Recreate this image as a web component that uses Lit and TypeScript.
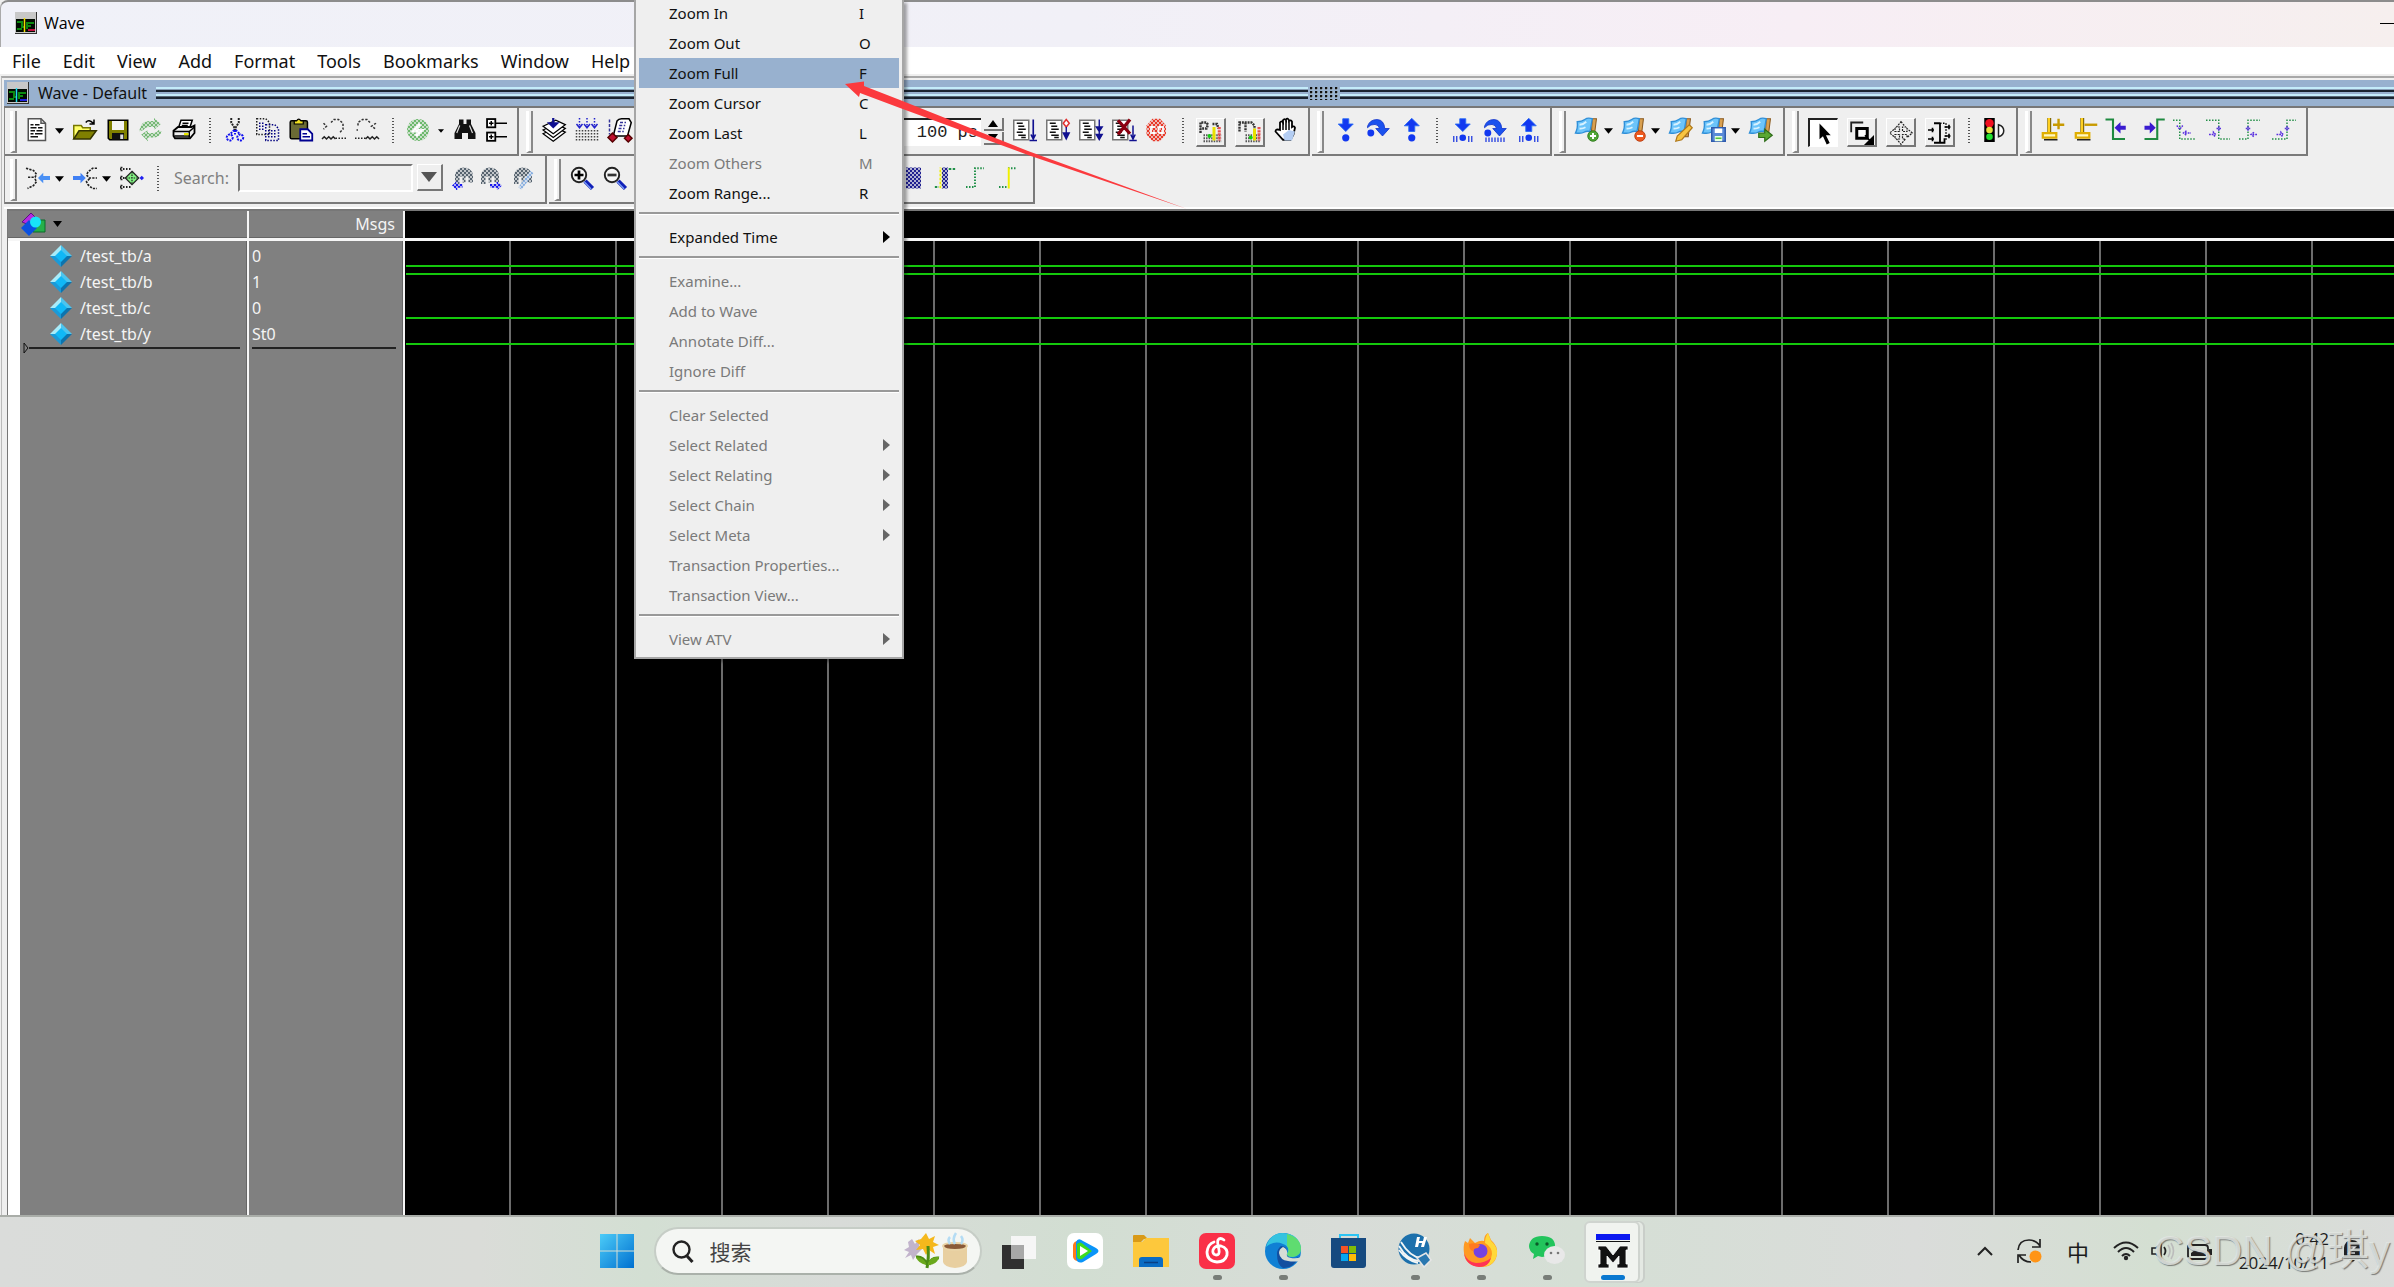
import { LitElement, html, svg, css, TemplateResult } from "lit";
import { customElement } from "lit/decorators.js";
import { classMap } from "lit/directives/class-map.js";

/* ---------- toolbar glyphs, drawn on a 16 x 16 grid ---------- */

const k = "#000";
const docLines = svg`<rect x=".5" y="1.5" width="10" height="13" fill="#fff" stroke="#777"/>
  <path d="M2.5 3.5h4M3.5 5.5h4M3.5 7.5h5M2.5 9.5h4M3.5 11.5h5M5.5 13h3" stroke="#111" fill="none"/>`;
const flag = svg`<path d="M11.500 .5h2.800l-1.500 12h-2z" fill="#d9a050" stroke="#8a5a20" stroke-width=".7"/>
  <path d="M1.500 2.500q3 0 5-1.500t5-.5L10 9q-2.500-.5-4 .5t-5.700.5q1.700-3 1.200-7.500z" fill="#6cc4fa" stroke="#2f8fd8" stroke-width=".9"/>
  <path d="M3 4.500q2.500 0 4.500-2M3 7q2 .3 4-.8" stroke="#d8f2ff" stroke-width="1.200" fill="none"/>`;
const binocular = svg`<path d="M4 1h3v3h2V1h3v3l3 6v4h-5v-4H6v4H1v-4l3-6z" fill="#111"/><path d="M4.500 5L2.500 10M11 5l2 5" stroke="#ddd" stroke-width=".8"/>`;
const ballDown = svg`<path d="M6.500 .5h4v3.500h3L8.500 9 3.500 4h3z" fill="#1238f0" stroke="#2a6cf5" stroke-width=".6"/>`;
const ballUp = svg`<path d="M8.500 .2l5 5h-3V9h-4V5.200h-3z" fill="#1238f0" stroke="#2a6cf5" stroke-width=".6"/>`;
const ballOver = svg`<path d="M1 5.500Q2.500 1 7.500 1q4.500.3 5 6h3l-4.500 5-4.500-5h2.500Q8.500 4.500 6 4.300 3 4 1 6.500z" fill="#1b52ee" stroke="#0a2bc8" stroke-width=".5"/><circle cx="3.200" cy="10" r="2.300" fill="#1238f0"/>`;
const bars = svg`<path d="M2.500 12v4M4.500 12v4M12.500 12v4M14.500 12v4" stroke="#2a44e0" stroke-width=".9"/>`;
const lens = svg`<circle cx="6" cy="6" r="4.800" fill="#f6f6f6" stroke="#222" stroke-width="1.300"/><path d="M10 10l5 5" stroke="#1020b8" stroke-width="3"/><path d="M9.600 10.600l4.500 4.600" stroke="#8ab0ff" stroke-width=".7"/>`;
const person = svg`<path d="M2 6q1-5 6-5t6 5v5h-3V7H9v4H7V7H5v5H2z" fill="#56636f"/>`;

const glyphs: Record<string, TemplateResult> = {
  doc: svg`<path d="M1.500 .5h8.500l3 3v11.500h-11.500z" fill="#fff" stroke="#555"/><path d="M10 .5v3h3" fill="none" stroke="#555"/><path d="M3 4.500h2M6 4.500h3M3 6.500h4M8 6.500h3M3 8.500h3M7 8.500h4M3 10.500h2M6 10.500h5M3 12.500h5" stroke="#111"/>`,
  open: svg`<path d="M.5 14V5h5l1 1.500h5V9" fill="#ffff6a" stroke="#777700"/><path d="M.5 14l3.500-5.500h11.500L11.500 14z" fill="#808000" stroke="#333300"/><path d="M8.500 3q2-2.500 5 .5M14 1v3h-3" stroke="${k}" fill="none"/>`,
  save: svg`<path d="M1.500 1.500h13v13h-12l-1-1z" fill="#808000" stroke="${k}"/><rect x="4" y="2" width="8" height="6" fill="#f4f4f4"/><rect x="4" y="10" width="8" height="4.500" fill="#111"/><rect x="9.500" y="11" width="2" height="3" fill="#ddd"/>`,
  refresh: svg`<path d="M1 6q1-4 6-4h3V0l4.500 4L10 8V6H7Q4 6 3 8L0 9z" fill="#74b874"/><path d="M15 9q-1 4-6 4H6v2.500L1.500 11 6 8v2h3q3 0 4-2z" fill="#74b874"/>`,
  print: svg`<path d="M4.500 6L6 1.500h7.500L12 6z" fill="#fff" stroke="${k}"/><path d="M7 3.500h4M6.500 5h4" stroke="${k}"/><path d="M1 8.500L4 6h9l2-1v5l-3 3.500H2l-1-1.500z" fill="#eee" stroke="${k}" stroke-width="1.200"/><path d="M1 9h10.500L15 6M1.500 12h10M11.500 9v4" stroke="${k}" fill="none"/><rect x="8" y="10" width="3" height="1.500" fill="#e8e800"/>`,
  cut: svg`<path d="M5.500 0v3l3 5M10.500 0v3l-3 5" stroke="#222" fill="none" stroke-width="1.300" stroke-dasharray="1.300 .7"/><path d="M7.500 8l-3 3M8.500 8l3 3M8 8v3" stroke="#1010ee" stroke-width="1.300" stroke-dasharray="1.300 .7"/><circle cx="4.500" cy="13" r="2" fill="none" stroke="#1010ee" stroke-width="1.300" stroke-dasharray="1.300 .7"/><circle cx="11.500" cy="13" r="2" fill="none" stroke="#1010ee" stroke-width="1.300" stroke-dasharray="1.300 .7"/>`,
  copy: svg`<path d="M.5.5h6l2.500 2.500v8h-8.500z" fill="none" stroke="#222" stroke-dasharray="1 1"/><path d="M6.500 4.500h6l2.500 2.500v8h-8.500z" fill="none" stroke="#000080" stroke-dasharray="1 1"/><path d="M8 8.500h5.500M8 10.500h5.500M8 12.500h5.500M2 3.500h4M2 5.500h4M2 7.500h4" stroke="#000080" stroke-dasharray="1 1"/>`,
  paste: svg`<rect x=".8" y="1.800" width="11.500" height="12" rx="1" fill="#6b6b35" stroke="${k}"/><path d="M3.500 4h6V2h-1.500q-1.500-2.500-3 0H3.500z" fill="#f0e020" stroke="${k}" stroke-width=".8"/><path d="M7.500 7.500h5l3 3v4.500h-8z" fill="#fff" stroke="#000090" stroke-width="1.200"/><path d="M9 10.500h3M9 12.500h5" stroke="#000090"/>`,
  undo: svg`<path d="M1 3.500l2 2-2 2M6 3l2-2h3l3 2.500v4L11.500 10" stroke="#333" fill="none" stroke-dasharray="1.500 1"/><path d="M0 14l1.500-1.500L3 14l1.500-1.500L6 14l1.500-1.500L9 14" stroke="#222" fill="none"/><path d="M9 13.500h7" stroke="#222" stroke-dasharray="1 1"/>`,
  redo: svg`<path d="M14 3.500l-3 2 3 2M10 3L8 1H5L2 3v3M1 8h1" stroke="#333" fill="none" stroke-dasharray="1.500 1"/><path d="M7 14l1.500-1.500L10 14l1.500-1.500L13 14l1.500-1.500L16 14" stroke="#222" fill="none"/><path d="M0 13.500h7" stroke="#222" stroke-dasharray="1 1"/>`,
  plus: svg`<circle cx="8" cy="8" r="7.300" fill="#6cb86c"/><path d="M9.500 4l-4 4.500h4.500L6.500 12" stroke="#fff" stroke-width="2.400" fill="none"/>`,
  find: binocular,
  tree: svg`<rect x=".7" y=".7" width="5.500" height="5.500" fill="#fff" stroke="${k}" stroke-width="1.200"/><rect x=".7" y="9.700" width="5.500" height="5.500" fill="#fff" stroke="${k}" stroke-width="1.200"/><path d="M2 3.500h3M3.500 2v3M2 12.500h3M3.500 11v3M6.500 3.500h7.500M6.500 12.500h7.500" stroke="${k}"/>`,
  stack: svg`<path d="M.7 10.500l8.500-4 6.300 3-8 6z" fill="#fff" stroke="${k}" stroke-width=".9"/><path d="M.7 8l8.500-4 6.300 3-8 6z" fill="#fff" stroke="${k}" stroke-width=".9"/><path d="M.7 5.500l8.500-4 6.300 3-8 6z" fill="#fff" stroke="${k}" stroke-width=".9"/><path d="M7.500 0v4M5 3.500L7.500 6 10 3.500z" stroke="#101090" fill="#101090" stroke-width="1.500"/>`,
  grid: svg`<path d="M.5 8.500h15M.5 10.500h15M.5 12.500h15M.5 14.500h15" stroke="#444" stroke-dasharray="1 1"/><path d="M3 0v5M8 0v5M13 0v5" stroke="#2222cc" stroke-dasharray="1 1"/><path d="M1 4l2 2.500L5 4M6 4l2 2.500L10 4M11 4l2 2.500L15 4" stroke="#2222cc" fill="none"/>`,
  scroll: svg`<path d="M3.500 12L6 2q1-1.500 3-1.500h5l1.500 2.500L13 12z" fill="#fff" stroke="${k}"/><path d="M8 3h4M7.500 5h4M7 7h4M6.500 9h4M1 1v10" stroke="#333399" stroke-dasharray="2 1"/><path d="M3 10l3 3-3 3-3-3zM13.500 11l2.500 2.500-2.500 2.500-2.500-2.500z" fill="#c01030" stroke="#500"/>`,
  run: svg`${docLines}<path d="M13.500 1v13M12 11l1.500 3 1.500-3M11 15h5" stroke="#101090" fill="none" stroke-width="1.100"/>`,
  runTo: svg`${docLines}<path d="M13.500 1l2 2.500-2 2.500-2-2.500z" fill="#fff" stroke="#e03030"/><path d="M13.500 6v8M11.500 10l2 4 2-4z" stroke="#101090" fill="#101090" stroke-width=".9"/>`,
  runAll: svg`${docLines}<path d="M13.500 1v13M11.500 6l2 3 2-3zM11.500 11l2 3.500 2-3.500z" stroke="#101090" fill="#101090" stroke-width=".9"/>`,
  runStop: svg`${docLines}<path d="M4 1.500l8 9M12 1L4 11" stroke="#8b0010" stroke-width="2.200"/><path d="M14 5v8M12.500 11l1.500 3 1.500-3M11.500 15h5" stroke="#101090" fill="none"/>`,
  stop: svg`<path d="M5 .5h5l4 4.500v6L10 15.500H5L1 11V5z" fill="#e83828"/><path d="M7 6H4v4h3M9 6v4M9 6h3v4H9" stroke="#fff" stroke-width="1.200" fill="none"/>`,
  pBtn: svg`<path d="M1 8V1h4l1 1.500L5 5H1M9 2h3l1 3" stroke="#333" stroke-width="1.600" stroke-dasharray="1.300 .6" fill="none"/><path d="M3 9.500h12M3 11.500h12M3 13.500h12" stroke="#555" stroke-width="1.200" stroke-dasharray="1 .7"/><path d="M10 4v9" stroke="#e8e000" stroke-width="2"/><path d="M13.500 4v9" stroke="#e85050" stroke-width="2" stroke-dasharray="1.500 .6"/><circle cx="7" cy="10" r="1.300" fill="#10d010"/>`,
  mBtn: svg`<path d="M1 7V1h8l2 2v3M5 1v6" stroke="#333" stroke-width="1.600" stroke-dasharray="1.300 .6" fill="none"/><path d="M5 9.500h10M5 11.500h10M5 13.500h10" stroke="#555" stroke-width="1.200" stroke-dasharray="1 .7"/><path d="M11 5v8" stroke="#e8e000" stroke-width="2"/><path d="M14 4v9" stroke="#e85050" stroke-width="2" stroke-dasharray="1.500 .6"/><circle cx="8.500" cy="11" r="1.300" fill="#10d010"/>`,
  hand: svg`<path d="M4 8V3q1-1.500 2 0V1.500q1-1.500 2 0V1q1-1.300 2 .5V2q1.200-1 2 .5V6q1.500-1 2 .5L13 11l-2 3.500H6L1 9q0-2 3-1z" fill="#fff" stroke="${k}" stroke-width="1.200"/><path d="M6 3v5M8 2v6M10 2.500V8" stroke="${k}"/><path d="M6 11l4-3 4 1-2 6H7z" fill="#b4cdf2"/>`,
  down: svg`${ballDown}<circle cx="8.500" cy="13.200" r="2.400" fill="#1238f0"/>`,
  over: ballOver,
  up: svg`${ballUp}<circle cx="8.500" cy="13.200" r="2.400" fill="#1238f0"/>`,
  downBars: svg`${ballDown}<circle cx="8.500" cy="13.200" r="2.200" fill="#1238f0"/>${bars}`,
  overBars: svg`${ballOver}<path d="M2 13v3M4 13v3M6 13v3M8 13v3M10 13v3M12 13v3M14 13v3" stroke="#2a44e0" stroke-width=".9"/>`,
  upBars: svg`${ballUp}<circle cx="8.500" cy="13.200" r="2.200" fill="#1238f0"/>${bars}`,
  flagAdd: svg`${flag}<circle cx="12" cy="12" r="3.500" fill="#4fa535" stroke="#2d7a1c" stroke-width=".6"/><path d="M12 10v4M10 12h4" stroke="#fff" stroke-width="1.300"/>`,
  flagDel: svg`${flag}<circle cx="12" cy="12" r="3.500" fill="#ee5a20" stroke="#b83c10" stroke-width=".6"/><path d="M10 12h4" stroke="#fff" stroke-width="1.300"/>`,
  flagEdit: svg`${flag}<path d="M13.500 4.500l2 2-7 8-4 1 1-3.500z" fill="#f8c440" stroke="#b07818" stroke-width=".8"/>`,
  flagSave: svg`${flag}<path d="M6.500 6.500h9v9h-9z" fill="#5a8ad8" stroke="#2f5cae"/><path d="M8.500 7h5v3h-5z" fill="#fff"/><path d="M8.500 12h5v3.500h-5z" fill="#e8ffe0"/><path d="M9 13.500h4" stroke="#58c040"/>`,
  flagGo: svg`${flag}<path d="M6.500 10h4V7.500l5 4-5 4V13h-4z" fill="#5aa832" stroke="#2d6c18" stroke-width=".8"/>`,
  cursor: svg`<path d="M5 1v10.500l2.300-2 2.500 5.500 2-1-2.500-5.200h3.200z" fill="${k}"/>`,
  zoomBox: svg`<path d="M.8 7.500V1h8" fill="none" stroke="#222" stroke-width="1.200"/><rect x="4.500" y="5" width="7" height="6.500" fill="#fff" stroke="${k}" stroke-width="2"/><path d="M10 9.500l5 5.500M15.500 10.500v5h-5z" stroke="${k}" fill="${k}"/>`,
  pan: svg`<path d="M8 .5l3 3.500H9v3h3V5l3.500 3-3.500 3V9H9v3h2l-3 3.500L5 12h2V9H4v2L.5 8 4 5v2h3V4H5z" fill="none" stroke="#222" stroke-width=".8" stroke-dasharray="1.300 .7"/>`,
  edit: svg`<path d="M4 1.500h4M8 1.500v13M4 14.500h7v-3" stroke="${k}" fill="none" stroke-width="1.200"/><path d="M8 1.500h4v12" stroke="${k}" fill="none" stroke-dasharray="1 1"/><path d="M0 6h4M0 12h4M11 4h4M11 10h4M3 4.500v3M3 10.500v3M14 2.500v3M14 8.500v3" stroke="${k}" stroke-width="1.100"/>`,
  traffic: svg`<path d="M1.500 0h7v16h-7z" fill="${k}"/><circle cx="5" cy="3.500" r="2.800" fill="#f01020"/><circle cx="5" cy="8" r="2.200" fill="#e8e040"/><circle cx="5" cy="12.500" r="2.200" fill="#20e030"/><path d="M11 4.500q3.500 1 3.500 4t-3.500 4z" fill="#fff" stroke="#222"/>`,
  curAdd: svg`<path d="M5.500 0v10" stroke="#705a00" stroke-width="2.600"/><path d="M5.300 0v10" stroke="#ffd020" stroke-width="1.600"/><path d="M1.200 10h9v3h-9z" fill="#fff8c0" stroke="#e0ae00" stroke-width="1.500"/><path d="M2 14.500h9" stroke="#222"/><path d="M8 4.500h7.500M11.700 .5v7" stroke="#c89a00" stroke-width="1.600"/>`,
  curDel: svg`<path d="M5.500 0v10" stroke="#705a00" stroke-width="2.600"/><path d="M5.300 0v10" stroke="#ffd020" stroke-width="1.600"/><path d="M1.200 10h9v3h-9z" fill="#fff8c0" stroke="#e0ae00" stroke-width="1.500"/><path d="M2 14.500h9" stroke="#222"/><path d="M7 4.500h8.500" stroke="#c89a00" stroke-width="1.600"/>`,
  edgePrev: svg`<path d="M-1 1h5v13h8" stroke="#1f8a40" stroke-width="1.400" fill="none"/><path d="M5 6.500l4-3.800v2.500h3.500v2.600H9v2.500z" fill="#3a1bd0"/>`,
  edgeNext: svg`<path d="M3 14h8.500V1h5" stroke="#1f8a40" stroke-width="1.400" fill="none"/><path d="M10.500 6.500l-4-3.800v2.500H3v2.600h3.500v2.500z" fill="#3a1bd0"/>`,
  fallPrev: svg`<path d="M0 1.500h4.500v12.500H15" stroke="#249048" stroke-dasharray="1 1" fill="none"/><path d="M2.500 5l2 2.500L6.500 5M9 8.500l-2 1.500 2 1.500M8 10h4" stroke="#5a30e0" stroke-dasharray="1.200 .6" fill="none"/>`,
  fallNext: svg`<path d="M0 1.500h8.500v12.500H16" stroke="#249048" stroke-dasharray="1 1" fill="none"/><path d="M7 7h3M8.500 5.500v3M2 11h3l0-1.500 1.500 1.500L5 12.500" stroke="#5a30e0" stroke-dasharray="1.200 .6" fill="none"/>`,
  risePrev: svg`<path d="M0 14h6V1.500h8" stroke="#249048" stroke-dasharray="1 1" fill="none"/><path d="M4.500 7h3M6 5.500v3M10 9.500L8 11l2 1.500M9 11h3" stroke="#5a30e0" stroke-dasharray="1.200 .6" fill="none"/>`,
  riseNext: svg`<path d="M0 14h10V1.500h6" stroke="#249048" stroke-dasharray="1 1" fill="none"/><path d="M8.500 7h3M10 5.500v3M3 11h3V9.500L7.500 11 6 12.500" stroke="#5a30e0" stroke-dasharray="1.200 .6" fill="none"/>`,
  collapse: svg`<path d="M0 1.500l5 1.500L7 5.500 6 7.500H1M6 8.500l1 2L5 13l-4 2" stroke="#222" stroke-width="1.100" stroke-dasharray="1.500 .8" fill="none"/><path d="M8 8l3.500-3.500v2.200H16v2.600h-4.500v2.200z" fill="#4a90f4"/>`,
  expand: svg`<path d="M16 1.500h-3L10 4 9 6l2 2h5M11 8.500l-2 2 1 2 3 2.500h3" stroke="#222" stroke-width="1.100" stroke-dasharray="1.500 .8" fill="none"/><path d="M8.500 8L5 4.500v2.200H0v2.600h5v2.200z" fill="#4080f4"/>`,
  target: svg`<path d="M0 2h8M0 14h8M0 8h4M1 .5v3M1 6.500v3M1 12.500v3" stroke="#222" stroke-dasharray="1 1" stroke-width="1.300"/><path d="M8 3.500L12.500 8 8 12.500 3.500 8z" fill="#80f080" stroke="#222" stroke-width=".8"/><path d="M8 4v8M4 8h8" stroke="#222" stroke-dasharray="1 .7" stroke-width=".8"/><path d="M14.500 6.500L16 8l-1.500 1.500L13 8z" fill="#2020f0"/>`,
  findPrev: svg`${person}<path d="M0 13l3.500-3v2H7v2.500H3.500v2z" fill="#1818f0"/>`,
  findNext: svg`${person}<path d="M16 13l-3.500-3v2H8v2.500h4.500v2z" fill="#1818f0"/>`,
  findOpt: svg`${person}<path d="M14 4L6 15" stroke="#8ab0e0" stroke-width="2.600"/>`,
  zoomIn: svg`${lens}<path d="M3 6h6M6 3v6" stroke="${k}" stroke-width="1.800"/>`,
  zoomOut: svg`${lens}<path d="M3 6h6" stroke="#333" stroke-width="1.800"/>`,
  blockAll: svg`<path d="M4 1h10v14H4z" fill="#202090"/>`,
  blockEdge: svg`<path d="M6 1h4v14H6z" fill="#202090"/><path d="M5 1v14" stroke="#f0f000" stroke-width="1.400"/><path d="M10 2h5M1 14h3" stroke="#209048" stroke-width="1.400"/>`,
  step: svg`<path d="M0 14h6V1.500h6" stroke="#209048" stroke-width="1.300" stroke-dasharray="1 1" fill="none"/>`,
  stepMark: svg`<path d="M0 14h5M6 1.500h6" stroke="#209048" stroke-width="1.300" stroke-dasharray="1 1" fill="none"/><path d="M6.500 1v14" stroke="#f0f000" stroke-width="1.300"/>`,
};

interface Tool { icon?: string; label?: string; caret?: boolean; faded?: boolean; raised?: boolean; pressed?: boolean; narrow?: boolean; sep?: boolean; }
const t = (icon: string, label: string, extra: Tool = {}): Tool => ({ icon, label, ...extra });
const sep: Tool = { sep: true };
const faded = { faded: true };

const fileTools = [t("doc", "New", { caret: true }), t("open", "Open"), t("save", "Save"), t("refresh", "Reload", faded), t("print", "Print"), sep,
  t("cut", "Cut"), t("copy", "Copy"), t("paste", "Paste"), t("undo", "Undo"), t("redo", "Redo"), sep,
  t("plus", "Add", { faded: true, caret: true }), t("find", "Find"), t("tree", "Collapse All", { narrow: true })];
const simTools = [t("stack", "Compile"), t("grid", "Compile All"), t("scroll", "Simulate"), t("edgePrev", "Back"), t("edgeNext", "Forward"), t("stack", "Load"),
  t("refresh", "Restart"), t("step", "Step"), t("up", "Up"), t("down", "Down")];
const runTools = [t("run", "Run"), t("runTo", "Continue Run"), t("runAll", "Run All"), t("runStop", "Break"), t("stop", "Stop", faded), sep,
  t("pBtn", "Performance Profiling", { raised: true }), t("mBtn", "Memory Profiling", { raised: true }), t("hand", "Pan")];
const stepTools = [t("down", "Step Into"), t("over", "Step Over"), t("up", "Step Out"), sep, t("downBars", "Step Into Instance"), t("overBars", "Step Over Instance"), t("upBars", "Step Out Instance")];
const flagTools = [t("flagAdd", "Add Bookmark", { caret: true }), t("flagDel", "Delete Bookmark", { caret: true }), t("flagEdit", "Manage Bookmarks"), t("flagSave", "Save Bookmarks", { caret: true }), t("flagGo", "Jump to Bookmark")];
const modeTools = [t("cursor", "Select Mode", { raised: true, pressed: true }), t("zoomBox", "Zoom Mode", { raised: true }), t("pan", "Pan Mode", { raised: true }), t("edit", "Edit Mode", { raised: true }), sep, t("traffic", "Stop Drawing")];
const cursorTools = [t("curAdd", "Insert Cursor"), t("curDel", "Delete Cursor"), t("edgePrev", "Previous Transition"), t("edgeNext", "Next Transition"), t("fallPrev", "Previous Falling Edge"), t("fallNext", "Next Falling Edge"), t("risePrev", "Previous Rising Edge"), t("riseNext", "Next Rising Edge")];
const expandTools = [t("collapse", "Collapse Time", { caret: true }), t("expand", "Expand Time", { caret: true }), t("target", "Expand at Cursor"), sep];
const zoomTools = [t("zoomIn", "Zoom In"), t("zoomOut", "Zoom Out"), t("find", "Zoom Full"), t("find", "Zoom Cursor"), t("find", "Zoom Range"), t("find", "Zoom Other"), t("step", "Edge"), t("step", "Level"), t("step", "Pulse"), t("step", "Event"),
  t("blockAll", "Logic Mode", faded), t("blockEdge", "Delta Mode", faded), t("step", "Event Mode"), t("stepMark", "Edge Mode")];

const signals = [
  { name: "/test_tb/a", value: "0", high: false },
  { name: "/test_tb/b", value: "1", high: true },
  { name: "/test_tb/c", value: "0", high: false },
  { name: "/test_tb/y", value: "St0", high: false },
];

interface Entry { text?: string; key?: string; sub?: boolean; off?: boolean; active?: boolean; rule?: boolean; }
const entries: Entry[] = [
  { text: "Zoom In", key: "I" }, { text: "Zoom Out", key: "O" }, { text: "Zoom Full", key: "F", active: true },
  { text: "Zoom Cursor", key: "C" }, { text: "Zoom Last", key: "L" }, { text: "Zoom Others", key: "M", off: true }, { text: "Zoom Range...", key: "R" },
  { rule: true }, { text: "Expanded Time", sub: true }, { rule: true },
  { text: "Examine...", off: true }, { text: "Add to Wave", off: true }, { text: "Annotate Diff...", off: true }, { text: "Ignore Diff", off: true },
  { rule: true }, { text: "Clear Selected", off: true }, { text: "Select Related", off: true, sub: true }, { text: "Select Relating", off: true, sub: true },
  { text: "Select Chain", off: true, sub: true }, { text: "Select Meta", off: true, sub: true }, { text: "Transaction Properties...", off: true }, { text: "Transaction View...", off: true },
  { rule: true }, { text: "View ATV", off: true, sub: true },
];

const resets = css`
  * { box-sizing: border-box; }
  button { font: inherit; color: inherit; background: none; border: 0; padding: 0; margin: 0; display: block; text-align: left; }
  svg { display: block; }
`;

@customElement("tool-set")
class ToolSet extends LitElement {
  static properties = { tools: { attribute: false } };
  declare tools: Tool[];
  static styles = [resets, css`
    :host { display: flex; gap: 9px; align-items: flex-start; }
    .item { display: flex; }
    .icon { width: 24px; height: 24px; }
    .narrow { width: 21px; }
    .narrow svg { width: 21px; }
    .icon svg { height: 24px; overflow: visible; }
    .faded svg { -webkit-mask: repeating-conic-gradient(#000 0 25%, rgba(0,0,0,.3) 0 50%) 0 0 / 4px 4px; mask: repeating-conic-gradient(#000 0 25%, rgba(0,0,0,.3) 0 50%) 0 0 / 4px 4px; }
    .raised { width: 30px; height: 29px; padding: 2px; border: 1px solid #fff; border-right: 2px solid #777; border-bottom: 2px solid #777; }
    .pressed { background: #fff; border: 2px solid #222; border-right: 1px solid #fff; border-bottom: 1px solid #fff; }
    .caret { width: 14px; height: 24px; display: flex; justify-content: flex-end; align-items: center; padding-top: 2px; }
    .sep { width: 9px; height: 25px; background: repeating-linear-gradient(#555 0 1px, transparent 1px 3px) 4px 0 / 2px 100% no-repeat; }
  `];
  render() {
    return this.tools.map(x => x.sep ? html`<div class="sep" role="separator"></div>` : html`
      <div class="item">
        <button class=${classMap({ icon: true, faded: !!x.faded, raised: !!x.raised, pressed: !!x.pressed, narrow: !!x.narrow })} aria-label=${x.label!}>
          <svg viewBox=${x.narrow ? "0 0 14 16" : "0 0 16 16"} aria-hidden="true">${glyphs[x.icon!]}</svg>
        </button>
        ${x.caret ? html`<button class="caret" aria-label="${x.label} options"><svg width=${x.faded ? 6 : 9} height="6" viewBox="0 0 10 6"><path d="M0 0h10L5 6z" fill="#000"/></svg></button>` : ""}
      </div>`);
  }
}

@customElement("context-menu")
class ContextMenu extends LitElement {
  static styles = [resets, css`
    :host { display: block; width: 270px; background: #efefef; border: 2px solid #a6a6a6; border-top: 0; padding: 0 3px 3px; font: 15px/30px "Noto Sans", "Open Sans", sans-serif; color: #111; box-shadow: 3px 3px 3px rgba(0,0,0,.35); }
    .list { margin-top: -2px; }
    .entry { display: grid; grid-template-columns: 1fr 22px 18px; align-items: center; width: 100%; height: 30px; padding-left: 30px; }
    .active { background: #98b1cf; }
    .off { color: #7a7a7a; }
    .mark { grid-column: 3; padding-left: 2px; }
    .rule { height: 14px; padding-top: 4px; }
    .line { border-top: 2px solid #999; border-bottom: 1px solid #fff; }
  `];
  render() {
    return html`<div class="list" role="menu">${entries.map(e => e.rule ? html`<div class="rule" role="separator"><div class="line"></div></div>` : html`
      <button role="menuitem" class=${classMap({ entry: true, active: !!e.active, off: !!e.off })}>
        <span>${e.text}</span>${e.key ? html`<span>${e.key}</span>` : ""}
        ${e.sub ? html`<span class="mark"><svg width="7" height="12" viewBox="0 0 7 12"><path d="M0 0l7 6-7 6z" fill=${e.off ? "#666" : "#000"}/></svg></span>` : ""}
      </button>`)}</div>`;
  }
}

@customElement("wave-panel")
class WavePanel extends LitElement {
  static styles = [resets, css`
    :host { flex: 1; display: grid; grid-template-columns: 239px 154px 1fr; column-gap: 2px; grid-template-rows: 27px 1fr; row-gap: 3px; margin-left: 3px; border-top: 2px solid #777; border-left: 1px solid #777; background: #f6f6f6; font: 16px/26px "Noto Sans", "Open Sans", sans-serif; color: #f4f4f4; }
    .head { background: #808080; border-bottom: 1px solid #666; display: flex; align-items: center; }
    .menu { padding-left: 13px; gap: 7px; display: flex; align-items: center; }
    .msgs { justify-content: flex-end; padding-right: 8px; }
    .dark { background: #000; }
    .col { background: #808080; border-right: 1px solid #666; padding-top: 2px; }
    .names { border-left: 12px solid #fff; }
    .name { display: flex; align-items: center; gap: 8px; padding-left: 30px; height: 26px; }
    .value { padding-left: 3px; height: 26px; }
    .end { border-top: 2px solid #222; margin: 0 6px 0 3px; }
    .endRow { display: flex; align-items: flex-start; height: 12px; }
    .endRow .end { flex: 1; margin: 0 6px 0 0; }
    .marker { margin: -5px 0 0 3px; }
    .waves { padding-top: 2px; background: #000 repeating-linear-gradient(90deg, transparent 0 104px, #6c6c6c 104px 106px); }
    .wave { height: 26px; padding: 22px 0 0 1px; }
    .high { padding-top: 4px; }
    .trace { height: 2px; background: #14c80c; }
  `];
  render() {
    return html`
      <div class="head"><button class="menu" aria-label="Object filter">
        <svg width="25" height="25" viewBox="0 0 25 25"><path d="M1 10L10 1l5 5-7 7z" fill="#b52be0" stroke="#5a1080"/><path d="M14 8h10v12H12z" fill="#25b04a" stroke="#0d6a28"/><path d="M8 8l8 8-8 8-8-8z" fill="#0a50e0"/><circle cx="14.500" cy="10" r="5.500" fill="#18e4f8"/></svg>
        <svg width="9" height="6" viewBox="0 0 9 6"><path d="M0 0h9L4.500 6z" fill="#000"/></svg></button></div>
      <div class="head msgs">Msgs</div>
      <div class="dark"></div>
      <div class="col names">${signals.map(s => html`<div class="name">
        <svg width="22" height="22" viewBox="0 0 22 22" aria-hidden="true"><path d="M11 0L0 11h11z" fill="#a8ecfa"/><path d="M11 0l11 11H11z" fill="#4cc4ee"/><path d="M0 11l11 11V11z" fill="#1b9ad8"/><path d="M22 11L11 22V11z" fill="#0c74ae"/><path d="M11 5l6 6-6 6-6-6z" fill="#10b8f6"/></svg>
        <span>${s.name}</span></div>`)}
        <div class="endRow"><svg class="marker" width="6" height="12" viewBox="0 0 6 12"><path d="M1 1l4 5-4 5z" fill="#808080" stroke="#111"/></svg><div class="end"></div></div></div>
      <div class="col">${signals.map(s => html`<div class="value">${s.value}</div>`)}<div class="end"></div></div>
      <div class="waves">${signals.map(s => html`<div class=${classMap({ wave: true, high: s.high })}><div class="trace"></div></div>`)}</div>`;
  }
}

const apps: { label: string; run?: boolean; current?: boolean; art: TemplateResult }[] = [
  { label: "Task View", art: svg`<path d="M1 12h22v24H1z" fill="#303030"/><path d="M10 3h25v23H10z" fill="#f6f6f6"/><path d="M10 12h13v14H10z" fill="#a8a8a8"/>` },
  { label: "Tencent Video", art: svg`<rect width="36" height="36" rx="7" fill="#fff"/><path d="M11 8q-4 0-5 4v12q1 4 5 4z" fill="#ff7a1a"/><path d="M9 9q2-5 7-1l13 7q5 3 0 6l-13 8q-5 2-7-3z" fill="#0a94f8"/><path d="M10 11q3-3 6 0l9 7-10 8q-4 1-5-2z" fill="#3ddc1c"/><path d="M13 13l8 5-8 5z" fill="#fff"/>` },
  { label: "File Explorer", art: svg`<path d="M0 3q0-1 1-1h10l4 4h-4l-3 3H0z" fill="#d99a18"/><path d="M0 9h9l4-4h23v29H0z" fill="#fdc83c"/><path d="M6 34v-7q0-3 3-3h18q3 0 3 3v7z" fill="#0b6cc4"/><path d="M11 29.500h14" stroke="#0a3f84" stroke-width="1.500"/>` },
  { label: "NetEase Music", run: true, art: svg`<rect width="36" height="36" rx="7" fill="#fa3048"/><path d="M25 7q-4-3-6 0-1 2 1 10 1 5-3 5-4-1-3-5 2-5 8-4 7 2 6 9-2 7-10 7-10-1-10-10 1-8 7-10" stroke="#fff" stroke-width="2.800" fill="none" stroke-linecap="round"/>` },
  { label: "Edge", run: true, art: svg`<circle cx="18" cy="18" r="18" fill="#1080d4"/><path d="M1 14Q5 0 18 0q16 1 18 15 0 8-8 9-6 0-6-3 4-7-4-10Q9 7 1 14z" fill="#35c3e0"/><path d="M22 1q13 3 14 14 0 8-8 9-6 0-6-3 3-4 0-8z" fill="#5fdc70"/><path d="M12 21q0-5 4-8 6 0 6 6-2 3 3 6 5 1 9-1-6 12-16 11Q12 32 12 21z" fill="#134fa0"/><path d="M14 20q0-4 4-6 5 2 4 7-1 3 4 4 7 1 12-2l-2 5q-8 1-13 0-8-1-9-8z" fill="#d7ddd7"/>` },
  { label: "Microsoft Store", art: svg`<path d="M9 6V2h18v4" fill="none" stroke="#2cc4f4" stroke-width="2"/><path d="M0 5h35v27q0 3-3 3H3q-3 0-3-3z" fill="#164a80"/><path d="M10 13h7v7h-7z" fill="#f35325"/><path d="M18 13h7v7h-7z" fill="#81bc06"/><path d="M10 21h7v7h-7z" fill="#05a6f0"/><path d="M18 21h7v7h-7z" fill="#ffba08"/>` },
  { label: "Quartus", run: true, art: svg`<circle cx="17" cy="16" r="15.500" fill="#1c70ac"/><path d="M2 13q8 14 20 15M2 17q8 11 19 13M4 9q9 15 20 16" stroke="#f2f6f6" stroke-width="1.800" fill="none"/><path d="M20 4h3l-1 4h4l1-4h3l-3 10h-3l1-4h-3l-1 4h-3z" fill="#fff"/><path d="M20 25l9-5 5 7-7 7z" fill="#2a78b0" stroke="#e6e6e6" stroke-width="1.500"/>` },
  { label: "Firefox", run: true, art: svg`<path d="M2 8l3 2 2-5 5 5q5-3 9-2 0-6 4-8l3 7q7 6 6 14-2 13-16 13Q2 33 1 20q-1-7 1-12z" fill="#ff9a22"/><path d="M25 0l3 8q7 6 6 13-2 12-15 13 9-4 10-13 0-7-7-11 0-6 3-10z" fill="#ffd83a"/><path d="M1 20q3 9 12 10 9 0 15-5-2 9-12 9Q3 33 1 20z" fill="#ff3355"/><circle cx="17.500" cy="18" r="7" fill="#7542e0"/><path d="M6 11q6-2 11 1l-2 3q-4 0-5 3-4-1-4-7z" fill="#ff7a20"/>` },
  { label: "WeChat", run: true, art: svg`<path d="M13 3q13 0 13 10T13 24l-4-1-5 3 1-5Q0 18 0 13 1 3 13 3z" fill="#22c45c"/><ellipse cx="25.500" cy="22" rx="10.500" ry="9" fill="#e8e8e8"/><circle cx="8" cy="11" r="1.700" fill="#0a5a28"/><circle cx="18" cy="11" r="1.700" fill="#0a5a28"/><circle cx="22" cy="20" r="1.300" fill="#777"/><circle cx="29" cy="20" r="1.300" fill="#777"/>` },
  { label: "ModelSim", run: true, current: true, art: svg`<path d="M1 1h34v6H1z" fill="#0a18f0"/><path d="M1 8.500h34" stroke="#111"/><path d="M3 13h8l7 9 7-9h8v4h-2v14h2v4H22v-4h2v-8l-6 7-6-7v8h2v4H3v-4h2V17H3z" fill="#111" stroke="#fff" stroke-width=".8"/>` },
];

@customElement("task-bar")
class TaskBar extends LitElement {
  static styles = [resets, css`
    :host { display: flex; align-items: center; height: 72px; padding: 0 31px 2px 25%; border-top: 2px solid #a9ada8; background: linear-gradient(90deg, #dadcda 0, #d8dcd8 12%, #dadcd8 20%, #d3dfd3 27%, #d8dbd8 35%, #d2ded2 45%, #d8dcd8 56%, #d5dfd5 66%, #dadcda 80%, #d4dfd2 90%, #dadcda 100%); font: 17px/24px "Open Sans", "Noto Sans CJK SC", sans-serif; color: #1c1c1c; }
    .search { display: flex; align-items: center; gap: 16px; width: 328px; height: 48px; margin: 0 19px; padding: 0 12px 0 16px; border: 2px solid #c6cdc6; border-bottom-color: #aab1aa; border-radius: 24px; background: #f4f6f3; }
    .field { flex: 1; min-width: 0; border: 0; background: none; padding: 0; font: 21px/28px "Noto Sans CJK SC", sans-serif; color: #444; outline: 0; }
    .field::placeholder { color: #444; opacity: 1; }
    .apps { display: flex; gap: 30px; }
    .app { position: relative; width: 36px; height: 36px; }
    .run::after { content: ""; position: absolute; left: 14px; top: 42px; width: 9px; height: 5px; border-radius: 3px; background: #787d78; }
    .current { z-index: 0; }
    .current::before { content: ""; position: absolute; z-index: -1; left: -11px; top: -12px; width: 52px; height: 58px; border: 2px solid #cfd4cf; border-radius: 6px; background: #f0f3ef; box-shadow: 4px 0 0 -1px #e4e9e3, 5px 0 0 0 #c9cec9; }
    .current::after { left: 6px; width: 24px; background: #0a78d0; }
    .tray { margin-left: auto; display: flex; align-items: center; }
    .tray > * { margin-left: 24px; }
    .ime { font: 22px/28px "Noto Sans CJK SC", sans-serif; }
    .tray .tight { margin-left: 12px; }
    .clock { width: 105px; text-align: right; white-space: nowrap; }
  `];
  render() {
    return html`
      <button aria-label="Start"><svg width="36" height="36" viewBox="0 0 36 36"><defs><linearGradient id="w" x2="1" y2="1"><stop stop-color="#4cccf8"/><stop offset="1" stop-color="#0070d0"/></linearGradient></defs><path d="M1 1h16.500v16.500H1zM18.500 1H35v16.500H18.500zM1 18.500h16.500V35H1zM18.500 18.500H35V35H18.500z" fill="url(#w)"/></svg></button>
      <div class="search">
        <svg width="22" height="23" viewBox="0 0 22 23"><circle cx="9.500" cy="9.500" r="8" fill="none" stroke="#222" stroke-width="2.400"/><path d="M15 16l5.500 6" stroke="#222" stroke-width="3"/></svg>
        <input class="field" type="text" placeholder="搜索" aria-label="搜索">
        <svg width="64" height="38" viewBox="0 0 64 38"><path d="M8 7l3 5 4-5v7l3 3-5 5-4 6-2-5-6 3 4-6-5-2 5-3-1-5z" fill="#c2b4cc"/><path d="M22 1l3 6 6-3-2 6 6 3-6 2 2 7-6-4-3 5-3-6-7 1 4-5-5-4 6-2z" fill="#f5b81c"/><path d="M24 14q1 12-1 22M23 32q-4-8-11-7M25 33q2-8 10-7" stroke="#4c8c14" stroke-width="3" fill="none"/><path d="M24 31q3-7 11-6-2 8-11 8zM22 31q-3-6-10-6 2 6 10 8z" fill="#6aa81c"/><path d="M39 14q12-4 24 0v16q-1 5-12 6-11-1-12-6z" fill="#e8cfa0"/><path d="M39 14q0-3 12-3t12 3q-1 4-12 4t-12-4z" fill="#8a5a38" stroke="#e9d3a6" stroke-width="2"/><path d="M46 12q-3-4 0-7M51 12q-3-5 1-11M57 12q3-4 0-8" stroke="#b4dcf4" stroke-width="2.500" fill="none"/></svg>
      </div>
      <div class="apps">${apps.map(a => html`<button class=${classMap({ app: true, run: !!a.run, current: !!a.current })} aria-label=${a.label}><svg width="36" height="36" viewBox="0 0 36 36">${a.art}</svg></button>`)}</div>
      <div class="tray">
        <button aria-label="Hidden icons"><svg width="16" height="10" viewBox="0 0 16 10"><path d="M1 9l7-7 7 7" fill="none" stroke="#222" stroke-width="2"/></svg></button>
        <button aria-label="Updates"><svg width="26" height="26" viewBox="0 0 26 26"><path d="M1 12Q2 2 12 2q7 0 11 6M23 1v8h-8M1 25v-8h8M2 17q4 7 12 7" fill="none" stroke="#222" stroke-width="1.700"/><circle cx="18.500" cy="18.500" r="6" fill="#ff9416"/></svg></button>
        <button class="ime" aria-label="Input method">中</button>
        <button aria-label="Network"><svg width="26" height="20" viewBox="0 0 26 20"><path d="M1 7q12-11 24 0M5 11q8-8 16 0M9 15q4-4 8 0" fill="none" stroke="#222" stroke-width="2"/><circle cx="13" cy="17" r="2.200" fill="#222"/></svg></button>
        <button class="tight" aria-label="Volume"><svg width="24" height="18" viewBox="0 0 24 18"><path d="M1 6h4l5-5v16l-5-5H1z" fill="none" stroke="#222" stroke-width="1.600"/><path d="M13 5q3 4 0 8" fill="none" stroke="#222" stroke-width="1.800"/><path d="M17 3q4 6 0 12M20 1q5 8 0 16" fill="none" stroke="#bbb" stroke-width="1.600"/></svg></button>
        <button class="tight" aria-label="Battery"><svg width="25" height="18" viewBox="0 0 25 18"><rect x="1" y="3" width="20" height="14" rx="3" fill="none" stroke="#222" stroke-width="1.800"/><path d="M4 14v-3l4-3 4 2h7v4zM22 7h3v6h-3zM3 0l3 3-3 4-3-3z" fill="#222"/></svg></button>
        <div class="clock tight"><div>0:42</div><div>2024/10/11</div></div>
        <button class="tight" aria-label="Notifications"><svg width="22" height="24" viewBox="0 0 22 24"><path d="M3 17V9q1-8 8-8t8 8v8l2 2H1zM8 21h6q-3 4-6 0z" fill="#222"/><path d="M8 8h6l-6 6h6" stroke="#ddd" stroke-width="1.500" fill="none"/></svg></button>
      </div>`;
  }
}

@customElement("app-root")
class AppRoot extends LitElement {
  static styles = [resets, css`
    :host { display: flex; flex-direction: column; position: relative; min-height: 100vh; overflow: hidden; background: #efefef; font-family: "Noto Sans", "Open Sans", sans-serif; color: #111; }
    .title { display: flex; align-items: center; height: 47px; padding: 0 0 3px 14px; gap: 7px; border-top: 2px solid #8c8c8c; border-left: 1px solid #aaa; border-top-left-radius: 8px; background: linear-gradient(90deg, #f0f1f8 0, #f1f0f7 45%, #f7eef5 75%, #f6efee 100%); font: 16px/24px "Open Sans", sans-serif; color: #000; }
    .min { margin-left: auto; width: 14px; height: 1px; background: #000; }
    .menubar { display: flex; gap: 22px; height: 27px; padding-left: 12px; background: #fff; font: 18px/29px "Noto Sans", sans-serif; }
    .frame { flex: 1; display: flex; flex-direction: column; margin: 2px 0 0 1px; border-top: 2px solid #a8a8a8; border-left: 1px solid #bbb; padding: 2px 0 0 2px; }
    .dock { display: flex; align-items: center; gap: 9px; height: 28px; padding-left: 3px; background: #98b1cf; border-bottom: 2px solid #777; font: 16px/26px "Noto Sans", sans-serif; }
    .grip { flex: 1; height: 12px; background: linear-gradient(#c4ecfa 0 2px, #8aa0b8 2px 3px, #1a2430 3px 5px, #98b1cf 5px 7px, #c4ecfa 7px 9px, #5a6a78 9px 10px, #1a2430 10px 12px); display: flex; justify-content: center; }
    .dots { width: 32px; height: 13px; margin-left: 98px; border: solid #98b1cf; border-width: 0 2px; background: #98b1cf radial-gradient(circle at 1px 1px, #111 1px, #d8ecf8 2px, #98b1cf 2px) 0 0 / 5px 4px; }
    .bar { display: flex; gap: 2px; border-left: 1px solid #888; }
    .group { display: flex; align-items: flex-start; gap: 9px; height: 48px; padding: 10px 10px 0 5px; border: solid #7a7a7a; border-width: 0 2px 2px 0; }
    .handle { width: 7px; height: 42px; margin: -7px 0 0 0; border-left: 3px solid #fff; border-right: 2px solid #888; border-bottom: 2px solid #888; }
    .amount { width: 109px; height: 28px; margin-right: -6px; padding: 0 3px 0 0; border: 0; border-top: 2px solid #222; border-bottom: 1px solid #fff; background: #fff; font: 17px/24px "Liberation Mono", monospace; text-align: right; color: #222; border-radius: 0; outline: 0; }
    .spin { display: grid; gap: 1px; width: 20px; }
    .spin button { height: 13px; border-right: 2px solid #777; border-bottom: 2px solid #777; display: grid; place-items: center; }
    .label { font-size: 16px; line-height: 24px; color: #808080; padding-left: 3px; }
    .combo { display: flex; gap: 4px; margin-top: -2px; }
    .entry { width: 175px; height: 28px; border: 2px solid #777; border-right-color: #fff; border-bottom-color: #fff; background: #efefef; border-radius: 0; padding: 0 4px; font: 16px/24px "Noto Sans", sans-serif; }
    .drop { width: 26px; height: 27px; border: 1px solid #fff; border-right: 2px solid #777; border-bottom: 2px solid #777; display: grid; place-items: center; }
    .pair { display: flex; gap: 2px; }
    .gap { height: 5px; border-bottom: 2px solid #fff; }
    .popup { position: absolute; left: 634px; top: 0; }
    .pointer { position: absolute; left: 840px; top: 76px; pointer-events: none; }
    .stamp { position: absolute; right: 4px; bottom: 8px; font: 42px/56px "Liberation Sans", "Noto Sans CJK SC", sans-serif; color: rgba(228,232,228,.82); text-shadow: 1px 1px 1px rgba(70,70,70,.65); white-space: nowrap; pointer-events: none; }
  `];
  logo(a: string, b: string) {
    return svg`<path d="M0 0h22v22H0z" fill="#c8c8c8"/><path d="M22 0v22H0" stroke="#333" stroke-width="2" fill="none"/><path d="M1 7h19v13H1z" fill="#020a02"/><path d="M2 10h5v5h3M2 17h5M12 17v-6h7M12 14h4" stroke="#0c8a10" stroke-width="2" fill="none"/><path d="M9.500 6v14" stroke=${a} stroke-width="1.500"/><path d="M13 18h7" stroke=${b} stroke-width="2"/>`;
  }
  set(list: Tool[]) { return html`<tool-set .tools=${list}></tool-set>`; }
  group(body: unknown) { return html`<div class="group" role="toolbar"><div class="handle"></div>${body}</div>`; }
  render() {
    return html`
      <header class="title"><svg width="22" height="22" viewBox="0 0 22 22">${this.logo("#f0e000", "#c01040")}</svg><span>Wave</span><button class="min" aria-label="Minimize"></button></header>
      <nav class="menubar">${["File", "Edit", "View", "Add", "Format", "Tools", "Bookmarks", "Window", "Help"].map(m => html`<button>${m}</button>`)}</nav>
      <main class="frame">
        <div class="dock"><svg width="22" height="22" viewBox="0 0 22 22">${this.logo("#20e0f0", "#2020e0")}</svg><span>Wave - Default</span><div class="grip"><div class="dots"></div></div></div>
        <div class="bar">
          ${this.group(this.set(fileTools))}
          ${this.group(html`${this.set(simTools)}
            <input class="amount" type="text" value="100 ps" aria-label="Run length">
            <div class="spin"><button aria-label="Increase"><svg width="10" height="7" viewBox="0 0 10 7"><path d="M5 0l5 7H0z"/></svg></button><button aria-label="Decrease"><svg width="10" height="7" viewBox="0 0 10 7"><path d="M0 0h10L5 7z"/></svg></button></div>
            ${this.set(runTools)}`)}
          ${this.group(this.set(stepTools))}${this.group(this.set(flagTools))}${this.group(this.set(modeTools))}${this.group(this.set(cursorTools))}
        </div>
        <div class="bar">
          ${this.group(html`${this.set(expandTools)}
            <label class="label" for="search">Search:</label>
            <div class="combo"><input class="entry" id="search" type="text"><button class="drop" aria-label="Search history"><svg width="16" height="10" viewBox="0 0 16 10"><path d="M0 0h16L8 10z" fill="#555"/></svg></button></div>
            <div class="pair">${this.set([t("findPrev", "Find Previous", faded)])}${this.set([t("findNext", "Find Next", faded)])}</div>
            ${this.set([t("findOpt", "Search Options", faded)])}`)}
          ${this.group(this.set(zoomTools))}
        </div>
        <div class="gap"></div>
        <wave-panel></wave-panel>
      </main>
      <task-bar></task-bar>
      <context-menu class="popup"></context-menu>
      <svg class="pointer" width="352" height="138" viewBox="0 0 352 138" aria-hidden="true"><path d="M5 8L24 5.500V10L60 24 188 75 347 133 188 79 60 32 20 17l-1 4z" fill="#fb3a3e"/></svg>
      <div class="stamp">CSDN @琪y</div>`;
  }
}
